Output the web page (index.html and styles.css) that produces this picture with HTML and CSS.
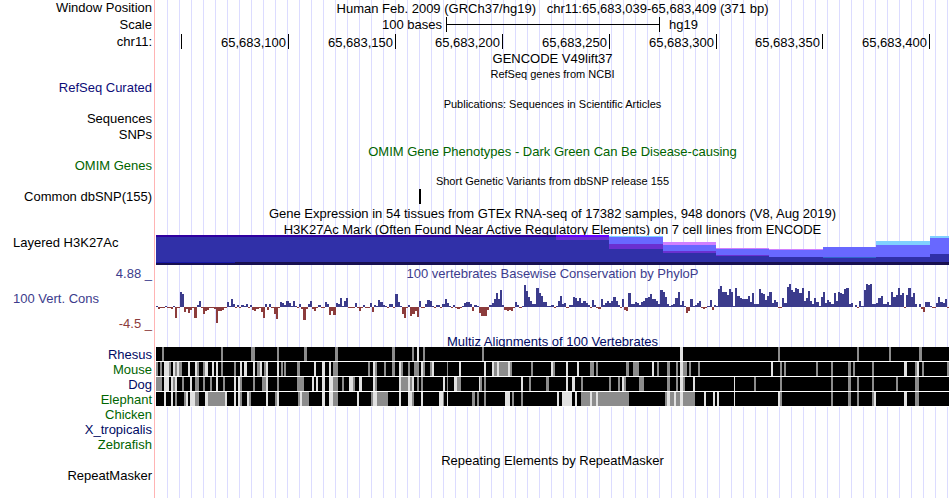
FILE: index.html
```html
<!DOCTYPE html>
<html lang="en">
<head>
  <meta charset="UTF-8">
  <title>chr11:65,683,039-65,683,409 - Human hg19</title>
  <link rel="stylesheet" href="styles.css">
</head>
<body>

  <main class="browser">
    <div class="row tall">
      <div class="label">Window Position</div>
      <div class="track title">Human Feb. 2009 (GRCh37/hg19) &nbsp; chr11:65,683,039-65,683,409 (371 bp)</div>
    </div>
    <div class="row ruler">
      <div class="label">Scale</div>
      <div class="track scale">
        <span class="scale-size">100 bases</span>
        <span class="scale-bar"></span>
        <span class="scale-db">hg19</span>
      </div>
    </div>
    <div class="row ruler">
      <div class="label">chr11:</div>
      <div class="track ticks">
        <span></span>
        <span>65,683,100</span>
        <span>65,683,150</span>
        <span>65,683,200</span>
        <span>65,683,250</span>
        <span>65,683,300</span>
        <span>65,683,350</span>
        <span>65,683,400</span>
      </div>
    </div>

    <div class="row tall">
      <div class="label"></div>
      <div class="track title">GENCODE V49lift37</div>
    </div>
    <div class="row short">
      <div class="label"></div>
      <div class="track title small">RefSeq genes from NCBI</div>
    </div>
    <div class="row tall">
      <div class="label navy">RefSeq Curated</div>
      <div class="track"></div>
    </div>
    <div class="row">
      <div class="label"></div>
      <div class="track title small">Publications: Sequences in Scientific Articles</div>
    </div>
    <div class="row tall">
      <div class="label">Sequences</div>
      <div class="track"></div>
    </div>
    <div class="row tall">
      <div class="label">SNPs</div>
      <div class="track"></div>
    </div>
    <div class="row">
      <div class="label"></div>
      <div class="track title green">OMIM Gene Phenotypes - Dark Green Can Be Disease-causing</div>
    </div>
    <div class="row">
      <div class="label green">OMIM Genes</div>
      <div class="track"></div>
    </div>
    <div class="row tall">
      <div class="label"></div>
      <div class="track title small">Short Genetic Variants from dbSNP release 155</div>
    </div>
    <div class="row tall">
      <div class="label">Common dbSNP(155)</div>
      <div class="track">
        <svg class="plot" viewBox="0 0 793 16" preserveAspectRatio="none">
          <rect x="263" y="0" width="2" height="15" fill="#000"/>
        </svg>
      </div>
    </div>
    <div class="row tall">
      <div class="label"></div>
      <div class="track title">Gene Expression in 54 tissues from GTEx RNA-seq of 17382 samples, 948 donors (V8, Aug 2019)</div>
    </div>
    <div class="row short">
      <div class="label"></div>
      <div class="track title">H3K27Ac Mark (Often Found Near Active Regulatory Elements) on 7 cell lines from ENCODE</div>
    </div>

    <div class="row layered">
      <div class="label left">Layered H3K27Ac</div>
      <div class="track">
        <svg class="plot" id="h3k27ac" viewBox="0 0 793 30" preserveAspectRatio="none"></svg>
      </div>
    </div>

    <div class="row cons">
      <div class="label axis">
        <span class="blue">4.88 _</span>
        <span class="blue left">100 Vert. Cons</span>
        <span class="red">-4.5 _</span>
      </div>
      <div class="track">
        <div class="title blue">100 vertebrates Basewise Conservation by PhyloP</div>
        <svg class="plot wiggle" id="phylop" viewBox="0 0 793 52" preserveAspectRatio="none"></svg>
      </div>
    </div>

    <div class="row short">
      <div class="label"></div>
      <div class="track title darknavy">Multiz Alignments of 100 Vertebrates</div>
    </div>
    <div class="row">
      <div class="label darknavy">Rhesus</div>
      <div class="track"><svg class="plot align" id="rhesus" viewBox="0 0 793 15" preserveAspectRatio="none"></svg></div>
    </div>
    <div class="row">
      <div class="label green">Mouse</div>
      <div class="track"><svg class="plot align" id="mouse" viewBox="0 0 793 15" preserveAspectRatio="none"></svg></div>
    </div>
    <div class="row">
      <div class="label darknavy">Dog</div>
      <div class="track"><svg class="plot align" id="dog" viewBox="0 0 793 15" preserveAspectRatio="none"></svg></div>
    </div>
    <div class="row">
      <div class="label green">Elephant</div>
      <div class="track"><svg class="plot align" id="elephant" viewBox="0 0 793 15" preserveAspectRatio="none"></svg></div>
    </div>
    <div class="row">
      <div class="label green">Chicken</div>
      <div class="track"></div>
    </div>
    <div class="row">
      <div class="label darknavy">X_tropicalis</div>
      <div class="track"></div>
    </div>
    <div class="row">
      <div class="label green">Zebrafish</div>
      <div class="track"></div>
    </div>

    <div class="row tall">
      <div class="label"></div>
      <div class="track title">Repeating Elements by RepeatMasker</div>
    </div>
    <div class="row last">
      <div class="label">RepeatMasker</div>
      <div class="track"></div>
    </div>
  </main>

  <script src="script.js"></script>
</body>
</html>
```
FILE: styles.css
```css
* {
  box-sizing: border-box;
}

body {
  margin: 0;
  background: #ffffff;
  color: #000000;
  font-family: "Liberation Sans", Arial, Helvetica, sans-serif;
  font-size: 13px;
  line-height: 15px;
}

.browser {
  display: flex;
  flex-direction: column;
  min-height: 100vh;
  padding-right: 1px;
}

.row {
  display: grid;
  grid-template-columns: 155px minmax(0, 1fr);
  column-gap: 1px;
  height: 15px;
  white-space: nowrap;
}

.row.short {
  height: 14px;
}

.row.tall {
  height: 16px;
}

.row.ruler {
  height: 17px;
  line-height: 17px;
}

.row.layered {
  height: 31px;
}

.row.cons {
  height: 67px;
}

.row.last {
  flex: 1;
  height: auto;
}

.label {
  padding-right: 2px;
  border-right: 1px solid #ffb4b4;
  text-align: right;
}

.left {
  padding-left: 13px;
  text-align: left;
}

.axis {
  display: flex;
  flex-direction: column;
  justify-content: space-between;
  padding-bottom: 2px;
}

/* guide line every 12px */
.track {
  background: repeating-linear-gradient(to right, transparent 0 11px, #dcdcff 11px 12px);
}

.title {
  text-align: center;
}

.row > .title {
  line-height: 17px;
}

.small {
  font-size: 11px;
}

.navy { color: #0c0c78; }
.darknavy { color: #000a64; }
.green { color: #006400; }
.blue { color: #3c3c8c; }
.red { color: #8c3c3c; }

.scale {
  display: grid;
  grid-template-columns: 290fr 214fr 289fr;
}

.scale-size {
  padding-right: 4px;
  text-align: right;
}

.scale-bar {
  height: 15px;
  margin-top: 1px;
  border: solid #000000;
  border-width: 0 1px;
  background: linear-gradient(#000000, #000000) center / 100% 1px no-repeat;
}

.scale-db {
  padding-left: 9px;
}

.ticks {
  display: grid;
  grid-template-columns: 26fr 107fr 107fr 107fr 107fr 107fr 106fr 107fr 19fr;
}

.ticks span {
  height: 15px;
  margin-top: 1px;
  padding-right: 2px;
  border-right: 1px solid #000000;
  text-align: right;
}

.plot {
  display: block;
  width: 100%;
  height: 100%;
  shape-rendering: crispEdges;
}

.layered .plot {
  height: 30px;
}

.plot.wiggle {
  height: 52px;
}
```
FILE: script.js
```js
const SVG_NS = "http://www.w3.org/2000/svg";

function addRect(svg, x, y, width, height, fill) {
  const rect = document.createElementNS(SVG_NS, "rect");
  rect.setAttribute("x", x);
  rect.setAttribute("y", y);
  rect.setAttribute("width", width);
  rect.setAttribute("height", height);
  rect.setAttribute("fill", fill);
  svg.appendChild(rect);
}

// one score per base, positive is conserved
const phylop = [
  1, -2, -1, -1, 1, -1, -1, -2, 1, -11, -1, 15, 13, -5, -2, -6, -3, -1, -11, 2,
  6, -1, -7, -4, -3, -1, -1, -2, -16, -4, -4, -3, -1, 5, 1, 8, 3, -1, 2, -1,
  2, 1, 3, -1, 2, -3, -4, -2, -1, -5, -11, 3, -3, 3, -1, -7, -12, -1, 5, 4,
  2, 6, 4, 1, 6, 1, -1, 3, -2, -13, -2, 3, 6, -2, -4, -1, 2, -1, -1, 5,
  3, -8, -4, -8, 4, 3, 9, 1, 6, 9, -1, -1, -1, 4, -1, -4, -1, 2, -1, -1,
  4, -5, 2, 1, 7, 5, 2, 1, -1, 3, 3, -1, 13, 5, 1, -7, -11, -1, 2, -9,
  -7, -4, -10, 6, -1, -1, 3, 7, 6, 1, -1, 2, 2, -1, 3, 8, 4, 1, -1, 2,
  -1, -2, -1, 1, 4, 5, 5, 3, -4, 2, 1, -6, -9, -9, -9, -3, 2, 4, 8, 14,
  8, 17, 2, -3, -4, -3, -4, -1, 5, 2, -1, 1, 22, 16, 10, 6, 3, 3, 19, 14,
  11, 5, 5, 1, 1, 2, -1, 1, 6, 11, 3, 4, -1, 2, 2, 10, 9, 6, 9, 4,
  6, 4, 2, -1, 7, 2, -1, -2, 8, 2, 4, 6, 4, 6, 10, 6, 2, -1, 8, -3,
  -4, 14, 3, 3, 5, 4, 2, 5, 6, 9, 10, 13, 8, 8, 6, 3, 17, 15, 10, 3,
  1, 2, 3, 9, 15, 2, 6, 1, -6, -4, 8, 1, 2, 4, 6, -1, -2, -1, 1, 7,
  -3, 2, 1, 18, 21, 15, 15, 12, 18, 15, 1, 19, 11, 9, 8, 8, 8, 11, 5, 14,
  3, 3, 18, 14, 13, 7, 11, 15, 4, 7, 5, -1, -1, 9, 4, 20, 23, 17, 15, 19,
  18, 14, 19, 6, 9, 16, 6, 3, 9, 5, 1, 10, 15, 4, 7, 5, 3, 14, 6, 15,
  14, 13, 18, 19, 3, 4, 0, 2, -1, 6, 1, 17, 23, 22, 23, 3, 3, 4, 9, 11,
  3, 3, 5, 2, 15, 10, 12, 19, 12, 14, -1, 12, 19, 10, 14, 3, 0, 3, -2, -5,
  5, 5, 1, -1, -1, 4, 10, 5, 4, 8, -1
];

function drawWiggle(id, scores) {
  const svg = document.getElementById(id);
  const step = 793 / scores.length;
  const zero = 26;
  scores.forEach((score, i) => {
    const x = Math.round(i * step);
    const width = Math.round((i + 1) * step) - x;
    if (score > 0) {
      addRect(svg, x, zero - score, width, score, "#3c3c8c");
    } else if (score < 0) {
      addRect(svg, x, zero, width, -score, "#8c3c3c");
    }
  });
}

// [x, y, width, height, colour]
const h3k27ac = [
  [0, 0, 400, 27, "#3030a8"],
  [0, 0, 400, 2, "#3000a0"],
  [0, 27, 793, 3, "#181050"],
  [0, 27, 79, 1, "#1818a8"],
  [400, 0, 53, 2, "#6600ff"],
  [400, 2, 53, 3, "#6a30d0"],
  [400, 5, 53, 22, "#3030a8"],
  [453, 1, 54, 1, "#80d0ff"],
  [453, 2, 54, 7, "#6868ff"],
  [453, 9, 54, 5, "#6a30d0"],
  [453, 14, 54, 13, "#3030a8"],
  [507, 7, 53, 3, "#d080ff"],
  [507, 10, 53, 6, "#6868ff"],
  [507, 16, 53, 2, "#6a30d0"],
  [507, 18, 53, 9, "#3030a8"],
  [560, 13, 53, 1, "#d080ff"],
  [560, 14, 53, 6, "#6868ff"],
  [560, 20, 53, 1, "#6a30d0"],
  [560, 21, 53, 6, "#3030a8"],
  [613, 14, 54, 1, "#d080ff"],
  [613, 15, 54, 7, "#6868ff"],
  [613, 22, 54, 5, "#3030a8"],
  [667, 12, 53, 10, "#6868ff"],
  [667, 22, 53, 1, "#3068c8"],
  [667, 23, 53, 4, "#3030a8"],
  [720, 6, 54, 4, "#80d0ff"],
  [720, 10, 54, 12, "#6868ff"],
  [720, 22, 54, 5, "#3030a8"],
  [774, 1, 19, 2, "#80d0ff"],
  [774, 3, 19, 16, "#6868ff"],
  [774, 19, 19, 8, "#3030a8"]
];

// x,width of the blocks that differ: mid = grey, low = nearly white
const alignments = {
  rhesus: {
    mid: "6,2 65,2 95,4 121,2 148,3 179,3 236,3 256,2 267,2 326,2 622,2 701,2 733,2 763,3",
    low: "261,2 524,3"
  },
  mouse: {
    mid: "0,2 4,2 13,2 19,2 23,3 41,2 47,2 65,2 78,2 101,3 108,2 125,2 128,2 141,3 177,5 212,2 219,2 228,2 236,3 245,2 252,2 258,5 267,2 274,2 291,1 338,3 343,9 354,2 375,2 397,2 434,4 440,2 470,3 477,6 501,2 511,3 520,2 527,4 533,2 542,2 624,2 628,2 660,2 675,2 692,3 697,2 716,2 759,2 766,2 791,2",
    low: "8,5 17,2 21,2 32,2 39,2 49,3 56,2 60,2 84,2 88,3 97,2 104,2 110,2 121,2 158,2 166,3 173,2 217,2 243,2 265,2 276,2 303,2 328,2 336,2 341,2 352,2 395,2 410,2 421,2 496,2 524,3 615,2 748,3 761,2"
  },
  dog: {
    mid: "0,6 17,2 26,2 39,4 47,2 54,2 67,2 84,2 97,2 106,4 121,2 141,7 177,5 186,2 197,2 219,2 245,7 254,2 261,2 265,2 291,1 301,4 324,2 328,2 373,2 390,3 425,2 453,2 462,2 468,2 483,5 511,3 520,2 527,2 598,2 624,2 675,2 692,3 701,2 716,2 740,2 759,4",
    low: "8,5 15,2 19,2 34,2 60,2 78,2 82,2 110,2 156,2 160,2 166,3 173,4 193,4 203,3 217,2 243,2 252,2 256,2 287,2 298,3 323,1 365,2 410,2 416,3 466,2 524,3 537,2 578,1"
  },
  elephant: {
    mid: "19,2 28,2 39,4 52,17 84,2 93,2 119,2 142,2 146,7 177,5 215,2 221,11 256,2 287,1 316,3 321,2 328,2 356,2 365,2 425,9 436,4 442,31 509,2 514,4 520,4 527,12 624,2 675,2 692,3 701,2 716,2 759,4",
    low: "8,2 15,2 30,2 34,5 49,3 69,2 78,2 82,2 91,2 110,2 121,2 144,2 166,3 173,4 201,2 217,4 243,2 252,4 265,2 283,4 291,1 349,5 401,2 406,10 419,2 434,2 440,2 511,3 518,2 524,3 548,2 557,2 561,2 578,1 622,2 718,2 748,3"
  }
};

function drawAlignment(id, blocks) {
  const svg = document.getElementById(id);
  addRect(svg, 0, 0, 793, 15, "#ffffff");
  addRect(svg, 0, 0, 793, 14, "#000000");
  [["mid", "#8c8c8c"], ["low", "#e1e1e1"]].forEach(([level, fill]) => {
    blocks[level].split(" ").forEach(block => {
      const [x, width] = block.split(",");
      addRect(svg, x, 0, width, 14, fill);
    });
  });
}

const layered = document.getElementById("h3k27ac");
h3k27ac.forEach(r => addRect(layered, ...r));

drawWiggle("phylop", phylop);

Object.keys(alignments).forEach(id => drawAlignment(id, alignments[id]));
```
